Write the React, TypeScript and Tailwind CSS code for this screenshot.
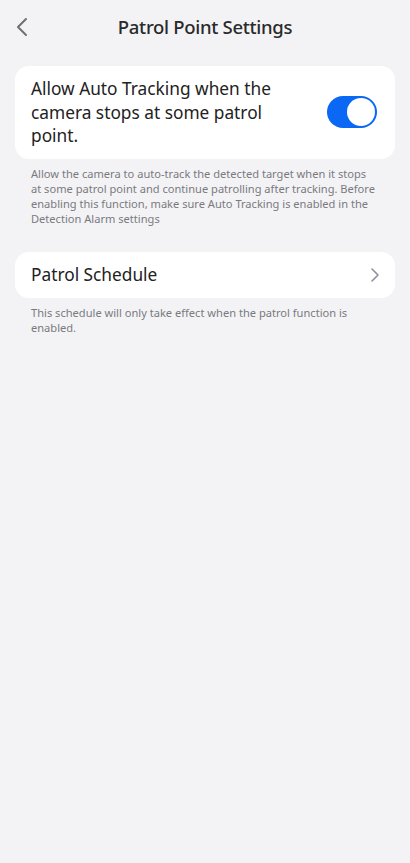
import React from "react";

export default function App() {
  return (
    <div
      className="w-[410px] h-[863px] bg-[#f3f3f6] text-[#222]"
      style={{ fontFamily: '"Noto Sans", "Open Sans", sans-serif' }}
    >
      <div className="relative h-[54px] flex items-center justify-center">
        <svg
          className="absolute left-[14px] top-[16px]"
          width="16"
          height="22"
          viewBox="0 0 16 22"
          fill="none"
        >
          <path d="M12 3 L4 11 L12 19" stroke="#6f6f74" strokeWidth="2" strokeLinecap="round" strokeLinejoin="round" />
        </svg>
        <div className="text-[18.5px] font-medium text-[#2a2a2a] tracking-[-0.3px]">Patrol Point Settings</div>
      </div>

      <div className="px-[15px] pt-[12px]">
        <div className="bg-white rounded-[14px] pl-[16px] pr-[18px] py-[11px] flex items-center">
          <div className="flex-1 text-[17.3px] leading-[23.5px] text-[#222] pr-[20px]">
            Allow Auto Tracking when the camera stops at some patrol point.
          </div>
          <div className="w-[50px] h-[32px] rounded-full bg-[#0a68f5] flex items-center justify-end pr-[2px] shrink-0">
            <div className="w-[28px] h-[28px] rounded-full bg-white" />
          </div>
        </div>
        <div className="pl-[16px] pr-[18px] pt-[7px] text-[11.1px] leading-[15px] text-[#7a7a7e]">
          Allow the camera to auto-track the detected target when it stops at some patrol point and continue patrolling after tracking. Before enabling this function, make sure Auto Tracking is enabled in the Detection Alarm settings
        </div>

        <div className="mt-[26px] bg-white rounded-[14px] h-[46px] pl-[16px] pr-[15px] flex items-center justify-between">
          <div className="text-[17.3px] text-[#222]">Patrol Schedule</div>
          <svg width="10" height="16" viewBox="0 0 10 16" fill="none">
            <path d="M2 2 L8 8 L2 14" stroke="#8f8f99" strokeWidth="1.6" strokeLinecap="round" strokeLinejoin="round" />
          </svg>
        </div>
        <div className="pl-[16px] pr-[18px] pt-[7px] text-[11.1px] leading-[15px] text-[#7a7a7e]">
          This schedule will only take effect when the patrol function is enabled.
        </div>
      </div>
    </div>
  );
}
